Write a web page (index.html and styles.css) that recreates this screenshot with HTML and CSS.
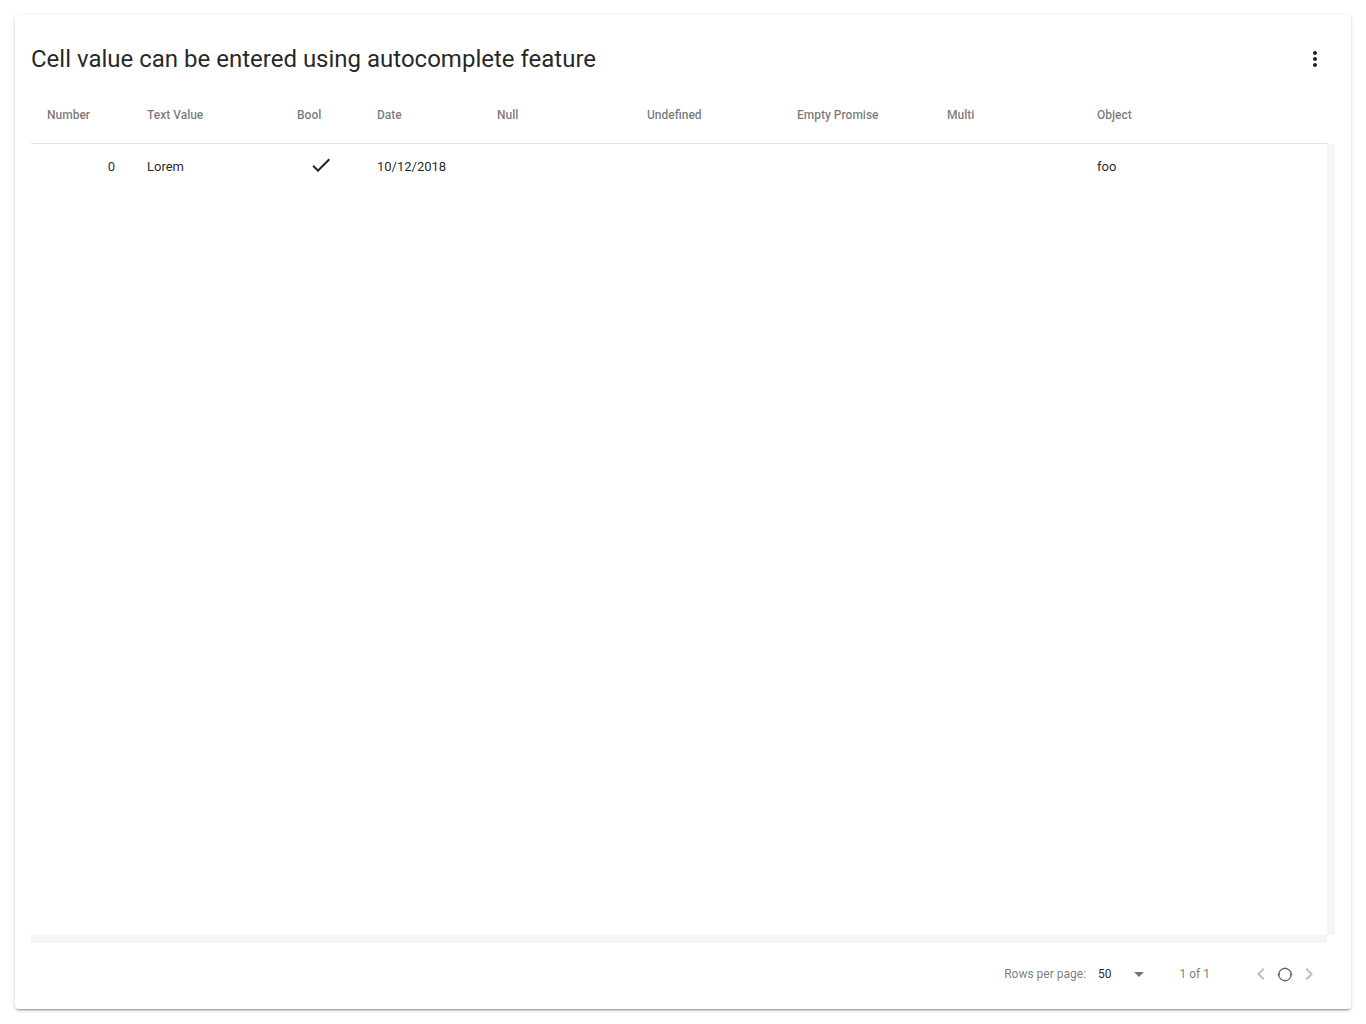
FILE: index.html
```html
<!DOCTYPE html>
<html lang="en">
<head>
<meta charset="utf-8">
<title>Autocomplete table</title>
<link rel="stylesheet" href="styles.css">
</head>
<body>
<div class="card">
  <div class="card-header">
    <h2 class="title">Cell value can be entered using autocomplete feature</h2>
    <button class="icon-btn" aria-label="more">
      <svg viewBox="0 0 24 24" width="24" height="24"><path fill="rgba(0,0,0,0.87)" d="M12 8c1.1 0 2-.9 2-2s-.9-2-2-2-2 .9-2 2 .9 2 2 2zm0 2c-1.1 0-2 .9-2 2s.9 2 2 2 2-.9 2-2-.9-2-2-2zm0 6c-1.1 0-2 .9-2 2s.9 2 2 2 2-.9 2-2-.9-2-2-2z"/></svg>
    </button>
  </div>

  <div class="table-wrap">
    <table class="grid head">
      <colgroup>
        <col class="c100"><col class="c150"><col class="c80"><col class="c120"><col class="c150"><col class="c150"><col class="c150"><col class="c150"><col>
      </colgroup>
      <thead>
        <tr>
          <th>Number</th><th>Text Value</th><th>Bool</th><th>Date</th><th>Null</th><th>Undefined</th><th>Empty Promise</th><th>Multi</th><th>Object</th>
        </tr>
      </thead>
    </table>
    <div class="body-area">
      <div class="body-view">
        <table class="grid body">
          <colgroup>
            <col class="c100"><col class="c150"><col class="c80"><col class="c120"><col class="c150"><col class="c150"><col class="c150"><col class="c150"><col>
          </colgroup>
          <tbody>
            <tr>
              <td class="num">0</td>
              <td>Lorem</td>
              <td class="center"><svg class="check" viewBox="0 0 24 24" width="24" height="24"><path fill="rgba(0,0,0,0.87)" d="M9 16.17L4.83 12l-1.42 1.41L9 19 21 7l-1.41-1.41z"/></svg></td>
              <td>10/12/2018</td>
              <td></td>
              <td></td>
              <td></td>
              <td></td>
              <td>foo</td>
            </tr>
          </tbody>
        </table>
      </div>
      <div class="track-v"></div>
      <div class="track-h"></div>
      <div class="track-corner"></div>
    </div>
  </div>

  <div class="footer">
    <span class="caption">Rows per page:</span>
    <span class="select">50</span>
    <svg class="drop" viewBox="0 0 24 24" width="24" height="24"><path fill="rgba(0,0,0,0.54)" d="M7 10l5 5 5-5z"/></svg>
    <span class="caption dark-cap">1 of 1</span>
    <div class="actions">
      <svg viewBox="0 0 24 24" width="24" height="24"><path fill="rgba(0,0,0,0.26)" d="M15.41 7.41L14 6l-6 6 6 6 1.41-1.41L10.83 12z"/></svg>
      <svg viewBox="0 0 24 24" width="24" height="24"><g fill="none" stroke="#616161" stroke-width="1.3"><circle cx="12" cy="12.5" r="6.2"/></g><g fill="#616161"><circle cx="5.8" cy="12.5" r="1.1"/><circle cx="18.2" cy="12.5" r="1.1"/><circle cx="12" cy="6.3" r="0.9"/><circle cx="12" cy="18.7" r="0.9"/></g></svg>
      <svg viewBox="0 0 24 24" width="24" height="24"><path fill="rgba(0,0,0,0.26)" d="M10 6L8.59 7.41 13.17 12l-4.58 4.59L10 18l6-6z"/></svg>
    </div>
  </div>
</div>
</body>
</html>
```

FILE: styles.css
```css
html, body {
  margin: 0;
  padding: 0;
  background: #fff;
}

body {
  padding: 15px;
  font-family: Roboto, "Liberation Sans", Arial, sans-serif;
  color: rgba(0, 0, 0, 0.87);
}

.card {
  height: 994px;
  display: flex;
  flex-direction: column;
  background: #fff;
  border-radius: 4px;
  box-shadow: 0 3px 1px -2px rgba(0,0,0,0.2), 0 2px 2px 0 rgba(0,0,0,0.14), 0 1px 5px 0 rgba(0,0,0,0.12);
  box-sizing: border-box;
}

.card-header {
  height: 72px;
  box-sizing: border-box;
  padding: 20px 12px 4px 16px;
  display: flex;
  align-items: center;
}

.title {
  flex: 1;
  margin: 0;
  font-size: 24px;
  font-weight: 400;
  line-height: 32px;
  color: rgba(0, 0, 0, 0.87);
  letter-spacing: 0;
}

.icon-btn {
  width: 48px;
  height: 48px;
  padding: 12px;
  border: 0;
  background: transparent;
  border-radius: 50%;
  display: flex;
  align-items: center;
  justify-content: center;
}

.table-wrap {
  flex: 1;
  display: flex;
  flex-direction: column;
  padding-left: 16px;
  padding-right: 16px;
  min-height: 0;
}

.grid {
  width: 1296px;
  table-layout: fixed;
  border-collapse: collapse;
  border-spacing: 0;
}

.c100 { width: 100px; }
.c150 { width: 150px; }
.c80 { width: 80px; }
.c120 { width: 120px; }

.head th {
  height: 56px;
  padding: 0 16px;
  text-align: left;
  font-size: 12px;
  font-weight: 500;
  color: rgba(0, 0, 0, 0.54);
  border-bottom: 1px solid #e0e0e0;
  vertical-align: middle;
  white-space: nowrap;
  box-sizing: border-box;
}

.body-area {
  display: grid;
  grid-template-columns: 1296px 8px;
  grid-template-rows: 791px 8px;
  width: 1304px;
}

.body-view {
  overflow: hidden;
}

.track-v {
  background: #f5f5f5;
}

.track-h {
  background: #f5f5f5;
}

.track-corner {
  background: #fff;
}

.body td {
  height: 46px;
  padding: 0 16px;
  font-size: 13px;
  line-height: 18px;
  color: rgba(0, 0, 0, 0.87);
  vertical-align: middle;
  box-sizing: border-box;
}

.body td.num {
  text-align: right;
}

.body td.center {
  text-align: center;
  padding: 0;
}

.check {
  display: block;
  margin: -3px auto 0;
}

.footer {
  height: 66px;
  box-sizing: border-box;
  padding: 0 30px 4px 0;
  display: flex;
  align-items: center;
  justify-content: flex-end;
}

.caption {
  font-size: 12px;
  color: rgba(0, 0, 0, 0.54);
  line-height: 16px;
}

.select {
  margin-left: 12px;
  font-size: 12px;
  line-height: 16px;
  color: rgba(0, 0, 0, 0.87);
}

.drop {
  display: block;
  margin-left: 15px;
}

.dark-cap {
  margin-left: 29px;
}

.actions {
  display: flex;
  align-items: center;
  margin-left: 39px;
}

.actions svg {
  display: block;
}
```
